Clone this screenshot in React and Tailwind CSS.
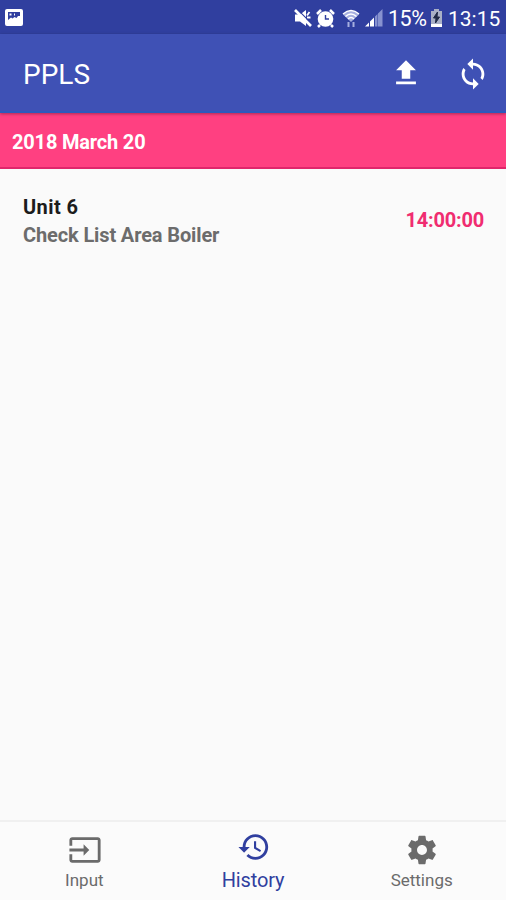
const paths = {
  upload: "M9 16h6v-6h4l-7-7-7 7h4zm-4 2h14v2H5z",
  sync: "M12 4V1L8 5l4 4V6c3.31 0 6 2.69 6 6 0 1.01-.25 1.97-.7 2.8l1.46 1.46C19.54 15.03 20 13.57 20 12c0-4.42-3.58-8-8-8zm0 14c-3.31 0-6-2.69-6-6 0-1.01.25-1.97.7-2.8L5.24 7.74C4.46 8.97 4 10.43 4 12c0 4.42 3.58 8 8 8v3l4-4-4-4v3z",
  input: "M21 3.01H3c-1.1 0-2 .9-2 2V9h2V4.99h18v14.03H3V15H1v4.01c0 1.1.9 1.98 2 1.98h18c1.1 0 2-.88 2-1.98v-14c0-1.11-.9-2-2-2zM11 16l4-4-4-4v3H1v2h10v3z",
  history: "M13 3c-4.97 0-9 4.03-9 9H1l3.89 3.89.07.14L9 12H6c0-3.87 3.13-7 7-7s7 3.13 7 7-3.13 7-7 7c-1.93 0-3.68-.79-4.94-2.06l-1.42 1.42C8.27 19.99 10.51 21 13 21c4.97 0 9-4.03 9-9s-4.03-9-9-9zm-1 5v5l4.28 2.54.72-1.21-3.5-2.08V8H12z",
  settings: "M19.43 12.98c.04-.32.07-.64.07-.98s-.03-.66-.07-.98l2.11-1.65c.19-.15.24-.42.12-.64l-2-3.46c-.12-.22-.39-.3-.61-.22l-2.49 1c-.52-.4-1.08-.73-1.69-.98l-.38-2.65C14.46 2.18 14.25 2 14 2h-4c-.25 0-.46.18-.49.42l-.38 2.65c-.61.25-1.17.59-1.69.98l-2.49-1c-.23-.09-.49 0-.61.22l-2 3.46c-.13.22-.07.49.12.64l2.11 1.65c-.04.32-.07.65-.07.98s.03.66.07.98l-2.11 1.65c-.19.15-.24.42-.12.64l2 3.46c.12.22.39.3.61.22l2.49-1c.52.4 1.08.73 1.69.98l.38 2.65c.03.24.24.42.49.42h4c.25 0 .46-.18.49-.42l.38-2.65c.61-.25 1.17-.59 1.69-.98l2.49 1c.23.09.49 0 .61-.22l2-3.46c.12-.22.07-.49-.12-.64l-2.11-1.65zM12 15.5c-1.93 0-3.5-1.57-3.5-3.5s1.57-3.5 3.5-3.5 3.5 1.57 3.5 3.5-1.57 3.5-3.5 3.5z",
};

const Icon = ({ name, className = "" }) => (
  <svg viewBox="0 0 24 24" fill="currentColor" className={`size-[34px] shrink-0 ${className}`}>
    <path d={paths[name]} />
  </svg>
);

const StatusBar = () => (
  <div className="flex h-[34px] shrink-0 items-center bg-[#303f9f] pl-[5px] pr-[6px] pt-[2px] text-white">
    {/* Screenshot notification */}
    <svg viewBox="0 0 18 17" className="mb-[2px] h-[17px] w-[18px]">
      <rect width="18" height="17" rx="2" fill="#fff" />
      <path d="M3 3h12v4h-2l-1.500 2-2-1-2 1.500-1.500-1L3 11z" fill="#303f9f" />
      <path d="M4.500 4.500h2v2h-2zM9 4.500h1v2H9z" fill="#fff" />
    </svg>

    {/* Muted */}
    <svg viewBox="0 0 18 18" className="ml-auto h-[18px] w-[18px]">
      <path d="M1 5.500h5l6-4.500v16l-6-4.500H1z" fill="#fff" />
      <path d="M13 6.500l2.500-3.500M13 8.500h3.500" stroke="#fff" strokeWidth="1.800" />
      <path d="M3 0l15 15" stroke="#303f9f" strokeWidth="1.200" />
      <path d="M1 1l16 16" stroke="#fff" strokeWidth="2.600" />
    </svg>
    {/* Alarm */}
    <svg viewBox="0 0 19 19" className="ml-[4px] h-[19px] w-[19px]">
      <path d="M1 5l4-4M18 5l-4-4M4 16l-2 2M15 16l2 2" stroke="#fff" strokeWidth="2.500" />
      <circle cx="9.500" cy="10" r="7.800" fill="#fff" />
      <path d="M9.500 6V10h3.500" fill="none" stroke="#303f9f" strokeWidth="1.400" />
    </svg>
    {/* Wifi with traffic arrows */}
    <svg viewBox="0 0 18 19" className="ml-[7px] h-[19px] w-[18px]">
      <path d="M1 5.500Q9-2.500 17 5.500L9 13z" fill="#a6afe0" />
      <path d="M1 5Q9-2 17 5M3.500 7.500q5.500-5 11 0M6 10q3-3 6 0" fill="none" stroke="#fff" strokeWidth="1.500" />
      <path d="M6.500 18v-5M11.500 13v5" stroke="#a6afe0" strokeWidth="2" />
    </svg>
    {/* Signal */}
    <svg viewBox="0 0 18 18" className="ml-[5px] h-[18px] w-[18px]">
      <path d="M0 17.500l4-4v4zM5 12.500l4-4v9H5z" fill="#fff" />
      <path d="M10 7.500l2.500-2.500v12.500H10zM13 4.500L17.500 0v17.500H13z" fill="#8792cf" />
    </svg>
    <span className="ml-[5px] w-[39px] whitespace-nowrap pt-px text-[21.500px] leading-none tracking-[-0.5px]">15%</span>
    {/* Battery */}
    <svg viewBox="0 0 11 18" className="ml-[4px] h-[18px] w-[11px]">
      <path d="M3 0h5v2h3v16H0V2h3z" fill="#a9b0c6" />
      <path d="M0 15h11v3H0z" fill="#fff" />
      <path d="M6.500 3L2.500 9h2.500l-.5 5 4-6H6z" fill="#202a46" stroke="#202a46" />
    </svg>
    <span className="ml-[6px] w-[52px] whitespace-nowrap pt-[3px] text-[21px] leading-none">13:15</span>
  </div>
);

const tabs = [
  { label: "Input", icon: "input" },
  { label: "History", icon: "history", active: true },
  { label: "Settings", icon: "settings" },
];

export default function App() {
  return (
    <div className="flex h-screen w-full flex-col overflow-hidden bg-[#fafafa] font-['Roboto',sans-serif]">
      <StatusBar />

      <header className="z-10 flex h-[79px] shrink-0 items-center border-b-2 border-[#2c59bd] bg-[#3f51b5] pl-[23px] pr-[16px] text-white shadow-[0_1px_3px_rgba(0,0,0,0.35)]">
        <h1 className="pt-[5px] text-[28px] leading-none">PPLS</h1>
        <button className="ml-auto pt-px">
          <Icon name="upload" />
        </button>
        <button className="ml-[33.500px] pt-[2px]">
          <Icon name="sync" />
        </button>
      </header>

      <div className="flex h-[56px] shrink-0 items-center border-b-2 border-[#e0266b] bg-[#ff4081] pl-3 pt-[3px] text-[20px] font-bold tracking-[-0.18px] text-white">
        2018 March 20
      </div>

      <main className="flex-1">
        <div className="flex items-center justify-between pl-[23px] pr-[22px] pt-[24px]">
          <div className="text-[20px] font-bold leading-[28px]">
            <p className="tracking-[0.4px] text-[#1c1c1c]">Unit 6</p>
            <p className="tracking-[-0.13px] text-[#6c6c6c]">Check List Area Boiler</p>
          </div>
          <span className="pb-[2px] text-[20px] font-bold tracking-[-0.2px] text-[#f02c70]">14:00:00</span>
        </div>
      </main>

      <nav className="grid h-[80px] shrink-0 grid-cols-3 border-t-2 border-[#f0f0f0] bg-[#fbfbfb]">
        {tabs.map((tab) =>
          tab.active ? (
            <div key={tab.label} className="flex flex-col items-center pt-[8px] text-[#303f9f]">
              <Icon name={tab.icon} className="ml-[2px]" />
              <span className="text-[20px] leading-[32px] tracking-[-0.15px]">{tab.label}</span>
            </div>
          ) : (
            <div key={tab.label} className="flex flex-col items-center pt-[11px] text-[#6b6b6b]">
              <Icon name={tab.icon} className="ml-px" />
              <span className="text-[17px] leading-[27px]">{tab.label}</span>
            </div>
          )
        )}
      </nav>
    </div>
  );
}
